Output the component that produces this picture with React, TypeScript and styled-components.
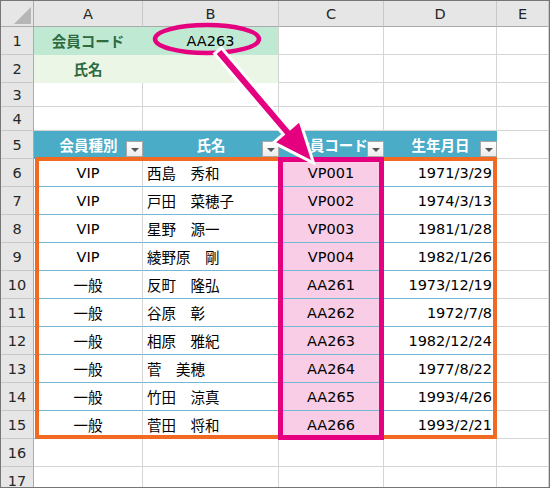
import React from 'react';
import styled, { createGlobalStyle } from 'styled-components';

const GlobalStyle = createGlobalStyle`
  html, body { margin: 0; padding: 0; background: #fff; }
  body { font-family: "DejaVu Sans", "Noto Sans CJK JP", sans-serif; }
`;

const GRID = '#d4d4d4';
const HEAD_BG = '#e6e6e6';
const HEAD_LINE = '#ababab';
const BLUE = '#4bacc8';
const BLUE_LINE = '#74b6d6';
const PINK = '#f9cde6';
const MAGENTA = '#e4007f';
const ORANGE = '#f26a21';
const MINT = '#c0e9d4';
const PALE = '#ebf6e7';
const GREEN_TEXT = '#2e6b3e';

const Wrapper = styled.div`
  position: relative;
  width: 550px;
  height: 488px;
  overflow: hidden;
`;

const Sheet = styled.div`
  width: 550px;
  height: 488px;
  box-sizing: border-box;
  border: 1px solid #767676;
  overflow: hidden;
  display: grid;
  grid-template-columns: 33px 109px 136px 105px 113px 1fr;
  grid-template-rows: 26px repeat(2, 28px) repeat(2, 24px) repeat(13, 28px);
  align-content: start;
  font-family: "DejaVu Sans", "Noto Sans CJK JP", sans-serif;
  font-size: 14.5px;
  color: #000;
  background: #fff;
`;

const Corner = styled.div`
  background: ${HEAD_BG};
  border-right: 1px solid ${HEAD_LINE};
  border-bottom: 1px solid ${HEAD_LINE};
  display: flex;
  justify-content: flex-end;
  align-items: flex-end;
  padding: 0 2px 2px 0;
`;

const CornerTriangle = styled.div`
  width: 17px;
  height: 17px;
  background: #b6b6b6;
  clip-path: polygon(100% 0, 100% 100%, 0 100%);
`;

const ColHeader = styled.div`
  background: ${HEAD_BG};
  border-right: 1px solid #c8c8c8;
  border-bottom: 1px solid ${HEAD_LINE};
  display: flex;
  align-items: center;
  justify-content: center;
  color: #262626;
  font-size: 14.5px;
`;

const RowHeader = styled.div`
  background: ${HEAD_BG};
  border-right: 1px solid ${HEAD_LINE};
  border-bottom: 1px solid #c8c8c8;
  display: flex;
  align-items: center;
  justify-content: center;
  color: #262626;
  font-size: 14.5px;
`;

type CellProps = {
  $bg?: string;
  $align?: 'left' | 'center' | 'right';
  $hline?: string;
  $vline?: string;
  $bold?: boolean;
  $color?: string;
};

const Cell = styled.div<CellProps>`
  position: relative;
  box-sizing: border-box;
  background: ${(p) => p.$bg || '#fff'};
  border-right: 1px solid ${(p) => p.$vline || GRID};
  border-bottom: 1px solid ${(p) => p.$hline || GRID};
  display: flex;
  align-items: center;
  justify-content: ${(p) =>
    p.$align === 'left' ? 'flex-start' : p.$align === 'right' ? 'flex-end' : 'center'};
  padding: 0 4px;
  white-space: nowrap;
  overflow: hidden;
  font-weight: ${(p) => (p.$bold ? 700 : 400)};
  color: ${(p) => p.$color || '#000'};
`;

const TableHead = styled.div`
  position: relative;
  box-sizing: border-box;
  background: ${BLUE};
  display: flex;
  align-items: center;
  justify-content: center;
  padding-bottom: 2px;
  color: #fff;
  font-weight: 700;
  white-space: nowrap;
`;

const FilterButton = styled.div`
  position: absolute;
  right: 0;
  bottom: 2px;
  width: 17px;
  height: 16px;
  box-sizing: border-box;
  border: 1px solid #a9a9a9;
  background: linear-gradient(#ffffff, #ececec);
  display: flex;
  align-items: center;
  justify-content: center;
  &::after {
    content: '';
    width: 0;
    height: 0;
    border-left: 4px solid transparent;
    border-right: 4px solid transparent;
    border-top: 4px solid #555;
    margin-top: 2px;
  }
`;

const OrangeFrame = styled.div`
  position: absolute;
  left: 35px;
  top: 157px;
  width: 462px;
  height: 282px;
  box-sizing: border-box;
  border: 4px solid ${ORANGE};
  pointer-events: none;
`;

const MagentaFrame = styled.div`
  position: absolute;
  left: 278px;
  top: 157px;
  width: 106px;
  height: 283px;
  box-sizing: border-box;
  border: 5px solid ${MAGENTA};
  pointer-events: none;
`;

const Annotation = styled.svg`
  position: absolute;
  left: 0;
  top: 0;
  pointer-events: none;
`;

const rows: [string, string, string, string][] = [
  ['VIP', '西島　秀和', 'VP001', '1971/3/29'],
  ['VIP', '戸田　菜穂子', 'VP002', '1974/3/13'],
  ['VIP', '星野　源一', 'VP003', '1981/1/28'],
  ['VIP', '綾野原　剛', 'VP004', '1982/1/26'],
  ['一般', '反町　隆弘', 'AA261', '1973/12/19'],
  ['一般', '谷原　彰', 'AA262', '1972/7/8'],
  ['一般', '相原　雅紀', 'AA263', '1982/12/24'],
  ['一般', '菅　美穂', 'AA264', '1977/8/22'],
  ['一般', '竹田　涼真', 'AA265', '1993/4/26'],
  ['一般', '菅田　将和', 'AA266', '1993/2/21'],
];

const heads = ['会員種別', '氏名', '会員コード', '生年月日'];

function Arrow() {
  const x1 = 219;
  const y1 = 52;
  const x2 = 311;
  const y2 = 160;
  const dx = x2 - x1;
  const dy = y2 - y1;
  const L = Math.sqrt(dx * dx + dy * dy);
  const ang = (Math.atan2(dy, dx) * 180) / Math.PI;
  const hl = 36;
  const hw = 15;
  const sw = 3;
  const pts = [
    [0, -sw],
    [L - hl, -sw],
    [L - hl, -hw],
    [L, 0],
    [L - hl, hw],
    [L - hl, sw],
    [0, sw],
  ]
    .map((p) => p.join(','))
    .join(' ');
  return (
    <g transform={`translate(${x1},${y1}) rotate(${ang})`}>
      <polygon
        points={pts}
        fill={MAGENTA}
        stroke="#fff"
        strokeWidth={6}
        strokeLinejoin="miter"
        paintOrder="stroke"
      />
    </g>
  );
}

export default function App() {
  const rowNums = Array.from({ length: 17 }, (_, i) => i + 1);
  return (
    <>
      <GlobalStyle />
      <Wrapper>
        <Sheet>
          <Corner>
            <CornerTriangle />
          </Corner>
          {['A', 'B', 'C', 'D', 'E'].map((c) => (
            <ColHeader key={c}>{c}</ColHeader>
          ))}
          {rowNums.map((r) => {
            const cells: React.ReactNode[] = [<RowHeader key="h">{r}</RowHeader>];
            if (r === 1) {
              cells.push(
                <Cell key="a" $bg={MINT} $vline={MINT} $hline={MINT} $bold $color={GREEN_TEXT}>
                  会員コード
                </Cell>,
                <Cell key="b" $bg={MINT} $hline={MINT}>
                  AA263
                </Cell>,
                <Cell key="c" />,
                <Cell key="d" />,
                <Cell key="e" />
              );
            } else if (r === 2) {
              cells.push(
                <Cell key="a" $bg={PALE} $vline={PALE} $hline={PALE} $bold $color={GREEN_TEXT}>
                  氏名
                </Cell>,
                <Cell key="b" $bg={PALE} $hline={PALE} />,
                <Cell key="c" />,
                <Cell key="d" />,
                <Cell key="e" />
              );
            } else if (r === 5) {
              heads.forEach((h, i) =>
                cells.push(
                  <TableHead key={i}>
                    {h}
                    <FilterButton />
                  </TableHead>
                )
              );
              cells.push(<Cell key="e" />);
            } else if (r >= 6 && r <= 15) {
              const d = rows[r - 6];
              cells.push(
                <Cell key="a" $hline={BLUE_LINE}>
                  {d[0]}
                </Cell>,
                <Cell key="b" $hline={BLUE_LINE} $align="left">
                  {d[1]}
                </Cell>,
                <Cell key="c" $hline={BLUE_LINE} $bg={PINK}>
                  {d[2]}
                </Cell>,
                <Cell key="d" $hline={BLUE_LINE} $align="right">
                  {d[3]}
                </Cell>,
                <Cell key="e" />
              );
            } else {
              cells.push(
                <Cell key="a" />,
                <Cell key="b" />,
                <Cell key="c" />,
                <Cell key="d" />,
                <Cell key="e" />
              );
            }
            return <React.Fragment key={r}>{cells}</React.Fragment>;
          })}
        </Sheet>
        <OrangeFrame />
        <MagentaFrame />
        <Annotation width={550} height={488} viewBox="0 0 550 488">
          <ellipse cx={207} cy={39} rx={52} ry={14} fill="none" stroke={MAGENTA} strokeWidth={4.5} />
          <Arrow />
        </Annotation>
      </Wrapper>
    </>
  );
}
